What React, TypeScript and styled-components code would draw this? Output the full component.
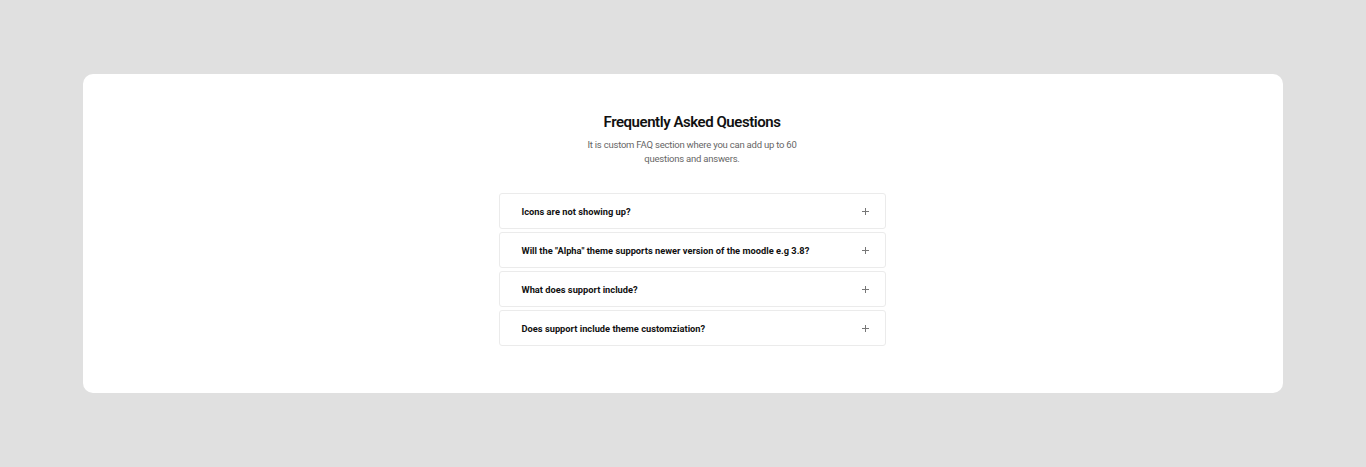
import styled, { createGlobalStyle } from 'styled-components';

const GlobalStyle = createGlobalStyle`
    html, body {
        margin: 0;
        padding: 0;
        background: #e0e0e0;
        font-family: Roboto, "Liberation Sans", sans-serif;
    }
`;

const Page = styled.div`
    height: 467px;
    padding: 74px 83px;
    box-sizing: border-box;
`;

const Card = styled.section`
    height: 319px;
    box-sizing: border-box;
    background: #ffffff;
    border-radius: 10px;
    padding: 39px 0 0 18px;
    display: flex;
    flex-direction: column;
    align-items: center;
`;

const Title = styled.h2`
    margin: 0;
    font-size: 15px;
    line-height: 18px;
    font-weight: 600;
    letter-spacing: -0.45px;
    color: #111;
`;

const Subtitle = styled.p`
    margin: 7px 0 0;
    width: 222px;
    text-align: center;
    font-size: 9.5px;
    line-height: 14px;
    letter-spacing: -0.22px;
    color: #666;
`;

const List = styled.div`
    margin-top: 27px;
    width: 387px;
    display: flex;
    flex-direction: column;
    gap: 3px;
`;

const Item = styled.div`
    height: 36px;
    box-sizing: border-box;
    border: 1px solid #ebebeb;
    border-radius: 3px;
    padding: 0 16px 0 22px;
    display: flex;
    align-items: center;
    justify-content: space-between;
    font-size: 9.3px;
    font-weight: 700;
    color: #111;
`;

const Plus = styled.span`
    position: relative;
    width: 7px;
    height: 7px;
    &::before, &::after {
        content: '';
        position: absolute;
        background: #777;
    }
    &::before {
        left: 0;
        right: 0;
        top: 3px;
        height: 1px;
    }
    &::after {
        top: 0;
        bottom: 0;
        left: 3px;
        width: 1px;
    }
`;

const questions = [
    'Icons are not showing up?',
    'Will the "Alpha" theme supports newer version of the moodle e.g 3.8?',
    'What does support include?',
    'Does support include theme customziation?',
];

export default function App() {
    return (
        <>
            <GlobalStyle />
            <Page>
                <Card>
                    <Title>Frequently Asked Questions</Title>
                    <Subtitle>It is custom FAQ section where you can add up to 60 questions and answers.</Subtitle>
                    <List>
                        {questions.map((q) => (
                            <Item key={q}>
                                <span>{q}</span>
                                <Plus />
                            </Item>
                        ))}
                    </List>
                </Card>
            </Page>
        </>
    );
}
